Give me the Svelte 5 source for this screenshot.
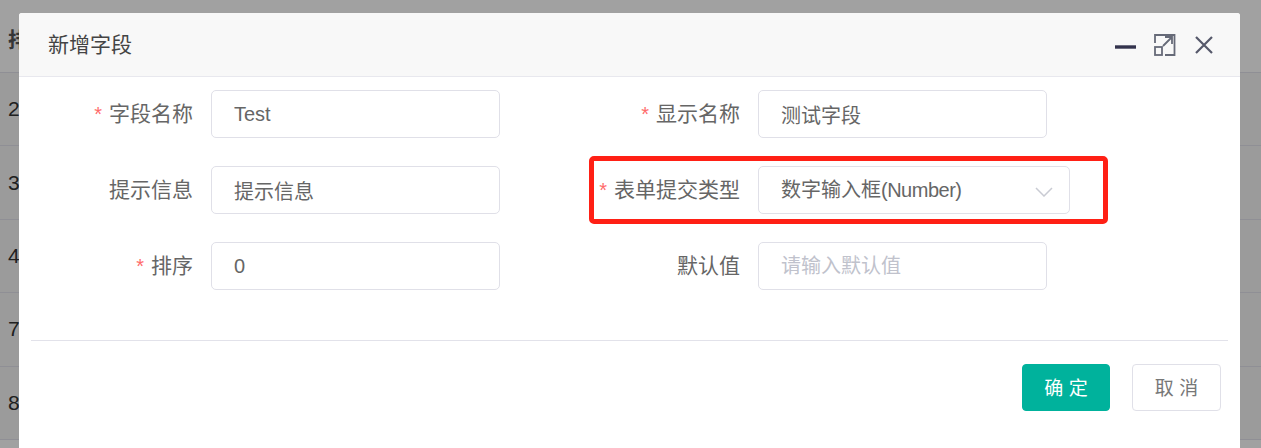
<script>
  // background table rows peeking out from behind the dialog
  const rows = ['2', '3', '4', '7', '8'];

  const fields = [
    { label: '字段名称', required: true, value: 'Test' },
    { label: '显示名称', required: true, value: '测试字段' },
    { label: '提示信息', required: false, value: '提示信息' },
    { label: '表单提交类型', required: true, value: '数字输入框', suffix: '(Number)', select: true },
    { label: '排序', required: true, value: '0' },
    { label: '默认值', required: false, placeholder: '请输入默认值' }
  ];
</script>

<div class="page">
  <div class="table">
    <div class="row head">排</div>
    {#each rows as n}
      <div class="row">{n}</div>
    {/each}
  </div>
  <div class="mask"></div>

  <div class="dialog">
    <header class="title">
      <span class="name">新增字段</span>
      <div class="tools">
        <svg width="22" height="22" viewBox="0 0 22 22"><path d="M0 13h21" stroke="#33334d" stroke-width="3.4" /></svg>
        <svg width="22" height="22" viewBox="0 0 22 22" fill="none" stroke="#666a78" stroke-width="1.8">
          <path d="M1 9V1h19.5v20h-9.500" />
          <rect x="1" y="13" width="7" height="8" />
          <path d="M9 12l9-9M11 3h7v7" />
        </svg>
        <svg width="22" height="22" viewBox="0 0 22 22" fill="none" stroke="#55586a" stroke-width="2.2"><path d="M3 3l16 16M19 3L3 19" /></svg>
      </div>
    </header>

    <form class="form">
      {#each fields as f}
        <div class="item">
          <label class="label">
            {#if f.required}<i>*</i>{/if}{f.label}
          </label>
          {#if f.select}
            <div class="input select">
              <span class="value">{f.value}<span class="latin">{f.suffix}</span></span>
              <svg width="18" height="10" viewBox="0 0 18 10" fill="none" stroke="#c9cbd3" stroke-width="1.5"><path d="M1 1l8 8 8-8" /></svg>
            </div>
          {:else if f.placeholder}
            <input class="input" placeholder={f.placeholder} />
          {:else}
            <input class="input" value={f.value} />
          {/if}
        </div>
      {/each}
    </form>

    <div class="divider"></div>

    <footer class="actions">
      <button type="button" class="ok">确 定</button>
      <button type="button" class="cancel">取 消</button>
    </footer>
  </div>

  <!-- annotation box from the screenshot -->
  <div class="mark"></div>
</div>

<style>
  :global(body) {
    margin: 0;
    font-family: "Liberation Sans", Arial, "Noto Sans CJK SC", sans-serif;
  }

  .page {
    position: relative;
    width: 1261px;
    height: 448px;
    overflow: hidden;
    background: #fff;
  }

  .table { font-size: 21px; color: #333; }
  .row {
    height: 72.4px;
    padding-left: 8px;
    background: #f6f6f6;
    border-bottom: 1px solid #e2e2ec;
    display: flex;
    align-items: center;
  }
  .row.head {
    height: 73px;
    padding-top: 4px;
    box-sizing: border-box;
    background: #fff;
    font-weight: 700;
    color: #555;
  }

  .mask {
    position: absolute;
    inset: 0;
    background: rgba(0, 0, 0, 0.37);
  }

  .dialog {
    position: absolute;
    left: 19px;
    top: 13px;
    width: 1221px;
    height: 460px;
    background: #fff;
    border-radius: 3px;
  }

  .title {
    height: 64px;
    box-sizing: border-box;
    background: #f8f8f8;
    border-bottom: 1px solid #e8e8ee;
    border-radius: 3px 3px 0 0;
    padding: 0 25px 0 29px;
    display: flex;
    align-items: center;
    justify-content: space-between;
    font-size: 21px;
    color: #444;
  }
  .name { margin-bottom: 3px; }
  .tools { display: flex; gap: 17px; }

  .form {
    display: grid;
    grid-template-columns: 481px 1fr;
    row-gap: 28px;
    padding: 13px 0 0 0;
  }
  .item { display: flex; align-items: center; }
  .item:nth-child(odd) .label { width: 174px; }
  .item:nth-child(even) .label { width: 240px; }
  .label {
    flex: none;
    text-align: right;
    margin: 0 18px 5px 0;
    font-size: 21px;
    color: #666;
    white-space: nowrap;
  }
  .label i { font-style: normal; color: #ff6b6b; margin-right: 7px; font-size: 20px; }

  .input {
    box-sizing: border-box;
    width: 289px;
    height: 48px;
    padding: 0 22px;
    border: 1px solid #e0e0e8;
    border-radius: 5px;
    background: #fff;
    font: inherit;
    font-size: 20px;
    color: #666;
    outline: none;
  }
  .input::placeholder { color: #c0c2cc; opacity: 1; }
  .select {
    width: 312px;
    display: flex;
    align-items: center;
    justify-content: space-between;
    padding-right: 16px;
  }
  .value { margin-bottom: 3px; }
  .latin { letter-spacing: -0.5px; }
  .select svg { margin-top: 3px; }

  .divider {
    margin: 50px 12px 0;
    height: 1px;
    background: #e2e2ea;
  }

  .actions {
    display: flex;
    justify-content: flex-end;
    gap: 22px;
    padding: 23px 19px 0 0;
  }
  .actions button {
    box-sizing: border-box;
    width: 88px;
    height: 47px;
    padding: 0 0 3px;
    border-radius: 4px;
    font: inherit;
    font-size: 19px;
  }
  .ok { background: #00b29c; border: 1px solid #00b29c; color: #fff; }
  .cancel { background: #fff; border: 1px solid #e0e0e8; color: #777; width: 89px !important; }

  .mark {
    position: absolute;
    left: 589px;
    top: 156px;
    width: 519px;
    height: 68px;
    box-sizing: border-box;
    border: 5px solid #ff2015;
    border-radius: 5px;
  }
</style>
